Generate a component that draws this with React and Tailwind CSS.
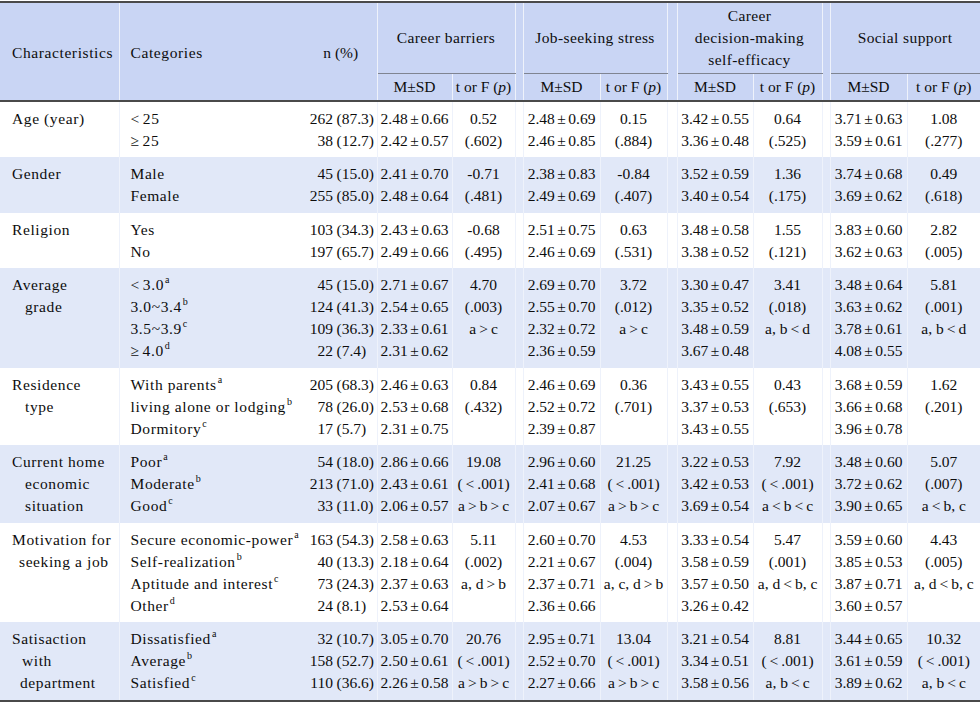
import React from "react";

const VB = "border-r border-r-[#eef2fb]";
const TOP = "border-t-2 border-t-[#4a4a4a]";
const BOT = "border-b-2 border-b-[#4a4a4a]";
const UL = "border-b border-b-[#7f8491]";

const groups = [
  { title: ["Career barriers"] },
  { title: ["Job-seeking stress"] },
  { title: ["Career", "decision-making", "self-efficacy"] },
  { title: ["Social support"] },
];

const rows = [
  {
    ch: [["Age (year)", 0]],
    cats: [["<", "25", ""], ["≥", "25", ""]],
    n: [["262", "(87.3)"], ["38", "(12.7)"]],
    g: [
      [["2.48±0.66", "2.42±0.57"], ["0.52", "(.602)"]],
      [["2.48±0.69", "2.46±0.85"], ["0.15", "(.884)"]],
      [["3.42±0.55", "3.36±0.48"], ["0.64", "(.525)"]],
      [["3.71±0.63", "3.59±0.61"], ["1.08", "(.277)"]],
    ],
  },
  {
    shade: true,
    ch: [["Gender", 0]],
    cats: [["", "Male", ""], ["", "Female", ""]],
    n: [["45", "(15.0)"], ["255", "(85.0)"]],
    g: [
      [["2.41±0.70", "2.48±0.64"], ["-0.71", "(.481)"]],
      [["2.38±0.83", "2.49±0.69"], ["-0.84", "(.407)"]],
      [["3.52±0.59", "3.40±0.54"], ["1.36", "(.175)"]],
      [["3.74±0.68", "3.69±0.62"], ["0.49", "(.618)"]],
    ],
  },
  {
    ch: [["Religion", 0]],
    cats: [["", "Yes", ""], ["", "No", ""]],
    n: [["103", "(34.3)"], ["197", "(65.7)"]],
    g: [
      [["2.43±0.63", "2.49±0.66"], ["-0.68", "(.495)"]],
      [["2.51±0.75", "2.46±0.69"], ["0.63", "(.531)"]],
      [["3.48±0.58", "3.38±0.52"], ["1.55", "(.121)"]],
      [["3.83±0.60", "3.62±0.63"], ["2.82", "(.005)"]],
    ],
  },
  {
    shade: true,
    ch: [["Average", 0], ["grade", 13]],
    cats: [["<", "3.0", "a"], ["", "3.0~3.4", "b"], ["", "3.5~3.9", "c"], ["≥", "4.0", "d"]],
    n: [["45", "(15.0)"], ["124", "(41.3)"], ["109", "(36.3)"], ["22", "(7.4)"]],
    g: [
      [["2.71±0.67", "2.54±0.65", "2.33±0.61", "2.31±0.62"], ["4.70", "(.003)", "a>c"]],
      [["2.69±0.70", "2.55±0.70", "2.32±0.72", "2.36±0.59"], ["3.72", "(.012)", "a>c"]],
      [["3.30±0.47", "3.35±0.52", "3.48±0.59", "3.67±0.48"], ["3.41", "(.018)", "a, b<d"]],
      [["3.48±0.64", "3.63±0.62", "3.78±0.61", "4.08±0.55"], ["5.81", "(.001)", "a, b<d"]],
    ],
  },
  {
    ch: [["Residence", 0], ["type", 13]],
    cats: [["", "With parents", "a"], ["", "living alone or lodging", "b"], ["", "Dormitory", "c"]],
    n: [["205", "(68.3)"], ["78", "(26.0)"], ["17", "(5.7)"]],
    g: [
      [["2.46±0.63", "2.53±0.68", "2.31±0.75"], ["0.84", "(.432)"]],
      [["2.46±0.69", "2.52±0.72", "2.39±0.87"], ["0.36", "(.701)"]],
      [["3.43±0.55", "3.37±0.53", "3.43±0.55"], ["0.43", "(.653)"]],
      [["3.68±0.59", "3.66±0.68", "3.96±0.78"], ["1.62", "(.201)"]],
    ],
  },
  {
    shade: true,
    ch: [["Current home", 0], ["economic", 13], ["situation", 13]],
    cats: [["", "Poor", "a"], ["", "Moderate", "b"], ["", "Good", "c"]],
    n: [["54", "(18.0)"], ["213", "(71.0)"], ["33", "(11.0)"]],
    g: [
      [["2.86±0.66", "2.43±0.61", "2.06±0.57"], ["19.08", "(<.001)", "a>b>c"]],
      [["2.96±0.60", "2.41±0.68", "2.07±0.67"], ["21.25", "(<.001)", "a>b>c"]],
      [["3.22±0.53", "3.42±0.53", "3.69±0.54"], ["7.92", "(<.001)", "a<b<c"]],
      [["3.48±0.60", "3.72±0.62", "3.90±0.65"], ["5.07", "(.007)", "a<b, c"]],
    ],
  },
  {
    ch: [["Motivation for", 0], ["seeking a job", 7]],
    cats: [["", "Secure economic-power", "a"], ["", "Self-realization", "b"], ["", "Aptitude and interest", "c"], ["", "Other", "d"]],
    n: [["163", "(54.3)"], ["40", "(13.3)"], ["73", "(24.3)"], ["24", "(8.1)"]],
    g: [
      [["2.58±0.63", "2.18±0.64", "2.37±0.63", "2.53±0.64"], ["5.11", "(.002)", "a, d>b"]],
      [["2.60±0.70", "2.21±0.67", "2.37±0.71", "2.36±0.66"], ["4.53", "(.004)", "a, c, d>b"]],
      [["3.33±0.54", "3.58±0.59", "3.57±0.50", "3.26±0.42"], ["5.47", "(.001)", "a, d<b, c"]],
      [["3.59±0.60", "3.85±0.53", "3.87±0.71", "3.60±0.57"], ["4.43", "(.005)", "a, d<b, c"]],
    ],
  },
  {
    shade: true,
    last: true,
    ch: [["Satisaction", 0], ["with", 10], ["department", 8]],
    cats: [["", "Dissatisfied", "a"], ["", "Average", "b"], ["", "Satisfied", "c"]],
    n: [["32", "(10.7)"], ["158", "(52.7)"], ["110", "(36.6)"]],
    g: [
      [["3.05±0.70", "2.50±0.61", "2.26±0.58"], ["20.76", "(<.001)", "a>b>c"]],
      [["2.95±0.71", "2.52±0.70", "2.27±0.66"], ["13.04", "(<.001)", "a>b>c"]],
      [["3.21±0.54", "3.34±0.51", "3.58±0.56"], ["8.81", "(<.001)", "a, b<c"]],
      [["3.44±0.65", "3.61±0.59", "3.89±0.62"], ["10.32", "(<.001)", "a, b<c"]],
    ],
  },
];

function Ops({ s }) {
  const parts = s.split(/([<>])/);
  return (
    <>
      {parts.map((p, i) =>
        p === "<" || p === ">" ? (
          <span key={i} className="mx-[3px]">
            {p}
          </span>
        ) : (
          <React.Fragment key={i}>{p}</React.Fragment>
        )
      )}
    </>
  );
}

function MS({ v }) {
  const [a, b] = v.split("±");
  return (
    <>
      {a}
      <span className="mx-[2.5px]">±</span>
      {b}
    </>
  );
}

const colCls = [
  "w-[119px]",
  "w-[186px]",
  "w-[72px]",
  "w-[75px]",
  "w-[63px]",
  "w-[8px]",
  "w-[77px]",
  "w-[67px]",
  "w-[10px]",
  "w-[76px]",
  "w-[69px]",
  "w-[8px]",
  "w-[77px]",
  "w-[73px]",
];

const indCls = { 0: "", 7: "pl-[7px]", 8: "pl-[8px]", 10: "pl-[10px]", 13: "pl-[13px]" };

export default function App() {
  return (
    <div className="w-[980px] h-[702px] bg-white pt-px overflow-hidden font-[family-name:'Liberation_Serif',serif]">
      <table className="table-fixed border-collapse w-[980px] text-[15.5px] leading-[22px] text-[#0d0d0d]">
        <colgroup>
          {colCls.map((c, i) => (
            <col key={i} className={c} />
          ))}
        </colgroup>
        <thead>
          <tr className="bg-[#c9d5f4] h-[71px]">
            <th rowSpan={2} className={`${TOP} ${BOT} ${VB} text-left pl-[12px] pt-[3px] font-normal tracking-[0.6px] whitespace-nowrap`}>
              Characteristics
            </th>
            <th rowSpan={2} className={`${TOP} ${BOT} text-left pl-[11px] pt-[3px] font-normal tracking-[0.6px]`}>
              Categories
            </th>
            <th rowSpan={2} className={`${TOP} ${BOT} ${VB} text-center pt-[3px] font-normal whitespace-nowrap`}>
              n (%)
            </th>
            {groups.map((g, gi) => (
              <React.Fragment key={gi}>
                <th colSpan={2} className={`${TOP} ${UL} ${VB} text-center font-normal tracking-[0.4px] py-[2px] whitespace-nowrap`}>
                  {g.title.map((t, ti) => (
                    <div key={ti}>{t}</div>
                  ))}
                </th>
                {gi < 3 && <th rowSpan={2} className={`${TOP} ${BOT} ${VB} font-normal`}></th>}
              </React.Fragment>
            ))}
          </tr>
          <tr className="bg-[#c9d5f4] h-[27px]">
            {groups.map((g, gi) => (
              <React.Fragment key={gi}>
                <th className={`${BOT} ${VB} text-center font-normal whitespace-nowrap`}>M±SD</th>
                <th className={`${BOT} ${gi < 3 ? VB : ""} text-center font-normal whitespace-nowrap`}>
                  t or F (<i>p</i>)
                </th>
              </React.Fragment>
            ))}
          </tr>
        </thead>
        <tbody>
          {rows.map((r, ri) => {
            const pad = `align-top pt-[6px] pb-[5.5px] ${r.last ? BOT : ""}`;
            return (
              <tr key={ri} className={r.shade ? "bg-[#e1e8f8]" : "bg-white"}>
                <td className={`${pad} ${VB} pl-[12px] tracking-[0.6px] whitespace-nowrap`}>
                  {r.ch.map(([t, ind], i) => (
                    <div key={i} className={indCls[ind]}>
                      {t}
                    </div>
                  ))}
                </td>
                <td className={`${pad} pl-[11px] tracking-[0.6px] whitespace-nowrap`}>
                  {r.cats.map(([op, t, sup], i) => (
                    <div key={i}>
                      {op && <span className="mr-[3px]">{op}</span>}
                      {t}
                      {sup && <sup className="text-[10px] -top-[7px] ml-px">{sup}</sup>}
                    </div>
                  ))}
                </td>
                <td className={`${pad} ${VB} pl-[3px] whitespace-nowrap`}>
                  {r.n.map(([a, b], i) => (
                    <div key={i} className="flex">
                      <span className="w-[25px] text-right">{a}</span>
                      <span className="ml-[3.5px]">{b}</span>
                    </div>
                  ))}
                </td>
                {r.g.map(([ms, tf], gi) => (
                  <React.Fragment key={gi}>
                    <td className={`${pad} ${VB} text-center whitespace-nowrap`}>
                      {ms.map((v, i) => (
                        <div key={i}>
                          <MS v={v} />
                        </div>
                      ))}
                    </td>
                    <td className={`${pad} ${gi < 3 ? VB : ""} text-center whitespace-nowrap`}>
                      {tf.map((v, i) => (
                        <div key={i}>
                          <Ops s={v} />
                        </div>
                      ))}
                    </td>
                    {gi < 3 && <td className={`${pad} ${VB}`}></td>}
                  </React.Fragment>
                ))}
              </tr>
            );
          })}
        </tbody>
      </table>
    </div>
  );
}
